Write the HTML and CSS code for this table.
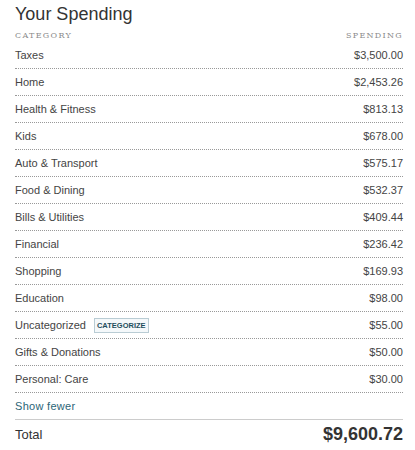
FILE: index.html
```html
<!DOCTYPE html>
<html>
<head>
<meta charset="utf-8">
<link rel="stylesheet" href="styles.css">
</head>
<body>
<div class="panel">
  <h1 class="title">Your Spending</h1>
  <div class="head">
    <span>Category</span><span>Spending</span>
  </div>
  <ul class="rows">
    <li class="row"><span class="name">Taxes</span><span class="amt">$3,500.00</span></li>
    <li class="row"><span class="name">Home</span><span class="amt">$2,453.26</span></li>
    <li class="row"><span class="name">Health &amp; Fitness</span><span class="amt">$813.13</span></li>
    <li class="row"><span class="name">Kids</span><span class="amt">$678.00</span></li>
    <li class="row"><span class="name">Auto &amp; Transport</span><span class="amt">$575.17</span></li>
    <li class="row"><span class="name">Food &amp; Dining</span><span class="amt">$532.37</span></li>
    <li class="row"><span class="name">Bills &amp; Utilities</span><span class="amt">$409.44</span></li>
    <li class="row"><span class="name">Financial</span><span class="amt">$236.42</span></li>
    <li class="row"><span class="name">Shopping</span><span class="amt">$169.93</span></li>
    <li class="row"><span class="name">Education</span><span class="amt">$98.00</span></li>
    <li class="row"><span class="name">Uncategorized <span class="badge">CATEGORIZE</span></span><span class="amt">$55.00</span></li>
    <li class="row"><span class="name">Gifts &amp; Donations</span><span class="amt">$50.00</span></li>
    <li class="row"><span class="name">Personal: Care</span><span class="amt">$30.00</span></li>
  </ul>
  <div class="more"><a href="#">Show fewer</a></div>
  <div class="total"><span class="tlabel">Total</span><span class="tamt">$9,600.72</span></div>
</div>
</body>
</html>
```
FILE: styles.css
```css
html, body { margin: 0; padding: 0; background: #fff; }
body { font-family: Arial, "Liberation Sans", sans-serif; color: #444; }
.panel { width: 388px; margin-left: 15px; padding-top: 4px; }
.title { margin: 0; font-size: 18px; font-weight: normal; color: #333; line-height: 21px; }
.head { display: flex; justify-content: space-between; font-family: Georgia, "DejaVu Serif", "Liberation Serif", serif; font-size: 8px; letter-spacing: 1.3px; text-transform: uppercase; color: #8a8a8a; margin-top: 6px; line-height: 10px; }
.rows { list-style: none; margin: 1px 0 0; padding: 0; }
.row { display: flex; justify-content: space-between; align-items: center; height: 26px; border-bottom: 1px dotted #999; font-size: 11px; }
.name { display: flex; align-items: center; gap: 8px; }
.badge { font-size: 7.5px; font-weight: bold; color: #1d4e5c; background: #f4f8fa; border: 1px solid #b9ccd4; padding: 2px 2px; line-height: 9px; }
.more { height: 26px; display: flex; align-items: center; border-bottom: 1px solid #ccc; font-size: 11px; }
.more a { color: #2b6577; text-decoration: none; letter-spacing: 0.3px; }
.total { display: flex; justify-content: space-between; align-items: center; height: 28px; }
.tlabel { font-size: 13px; color: #333; }
.tamt { font-size: 18px; font-weight: bold; color: #333; }
```
